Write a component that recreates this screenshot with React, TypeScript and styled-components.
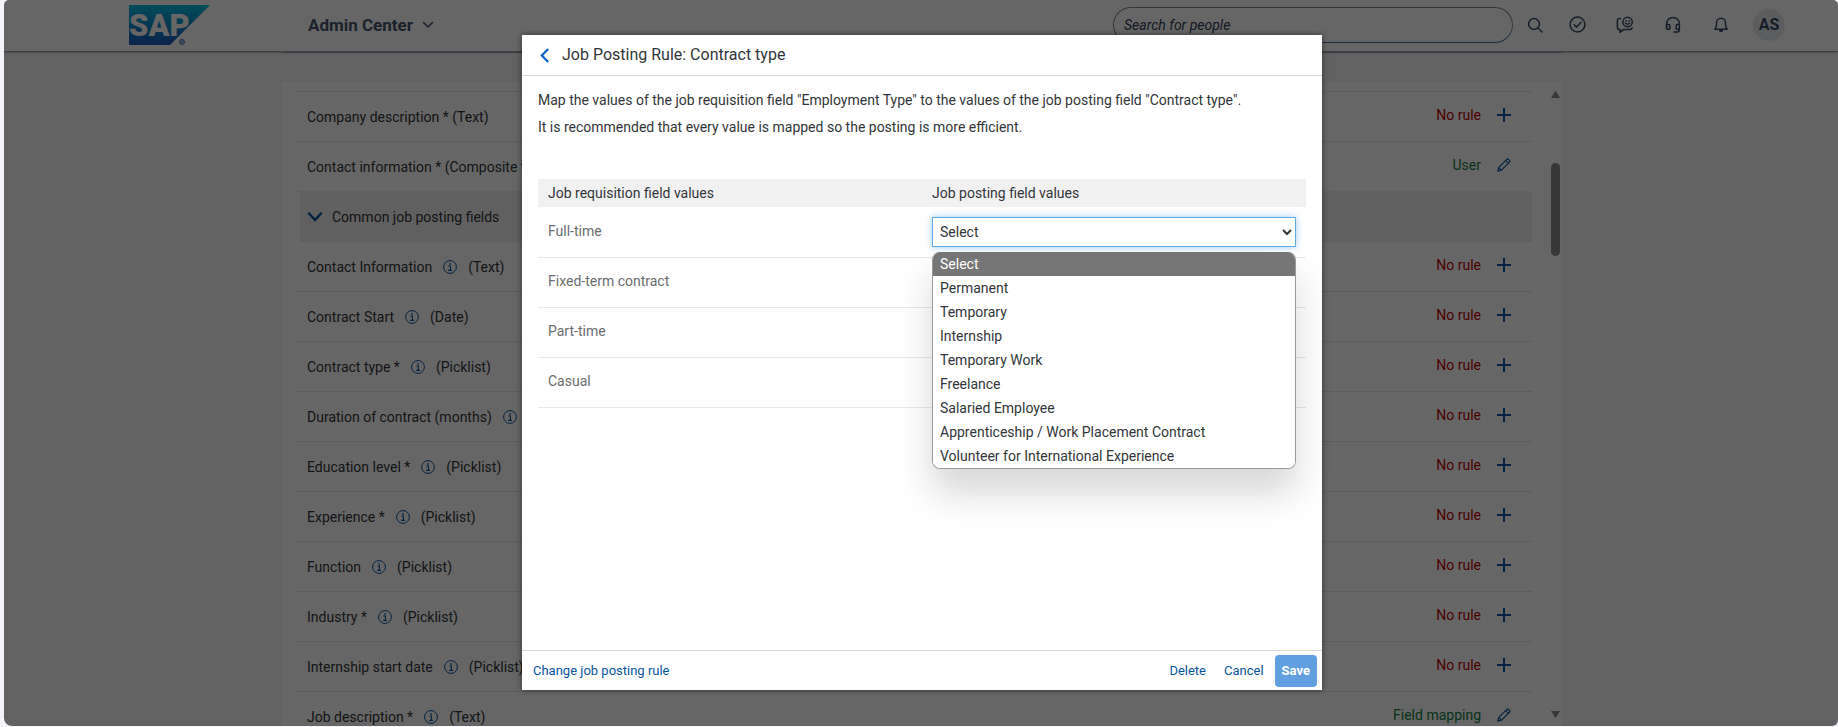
import React from "react";
import styled, { createGlobalStyle, css } from "styled-components";

const Global = createGlobalStyle`
  *, *::before, *::after { box-sizing: border-box; }
  body { margin: 0; background: #f4f5f8; font: 14px/20px Roboto, "Liberation Sans", sans-serif; color: #32363a; }
  button, input, select { font: inherit; color: inherit; }
  h1, p, ul { margin: 0; padding: 0; font-weight: 400; }
`;

const Frame = styled.div`
  position: relative;
  display: flex;
  flex-direction: column;
  height: calc(100vh - 1px);
  margin-left: 4px;
  background: #f5f6f7;
  border-radius: 5px 5px 6px 8px;
  overflow: hidden;
`;

const ShellBar = styled.header`
  display: flex;
  align-items: center;
  flex: none;
  height: 51px;
  padding: 0 45px 2px 125px;
  background: #fff;
  box-shadow: 0 1px 2px rgba(40, 60, 90, 0.7);
`;

const Logo = styled.svg`
  width: 81px;
  height: 40px;
  margin-right: 98px;
`;

const PlainButton = styled.button`
  display: flex;
  align-items: center;
  padding: 0;
  border: 0;
  background: none;
`;

const AreaButton = styled(PlainButton)`
  gap: 9px;
  color: #45556b;
  font-size: 17px;
  font-weight: 700;
`;

const ShellTools = styled.nav`
  display: flex;
  align-items: center;
  margin-left: auto;
`;

const PeopleSearch = styled.input`
  width: 400px;
  height: 36px;
  margin-right: 4px;
  padding: 0 10px;
  background: #fff;
  border: 1px solid #7e8ca0;
  border-bottom-color: #4f70a8;
  border-radius: 18px;
  &::placeholder { color: #32405a; font-style: italic; opacity: 1; }
`;

const ToolButton = styled(PlainButton)<{ $narrow?: boolean }>`
  justify-content: center;
  width: ${p => (p.$narrow ? 36 : 48)}px;
  height: 36px;
  color: #354a68;
`;

const Avatar = styled.span`
  width: 32px;
  height: 32px;
  border-radius: 16px;
  background: #e6e8ee;
  color: #354a68;
  font-size: 16px;
  font-weight: 700;
  line-height: 32px;
`;

const Page = styled.div`
  display: flex;
  flex: 1;
  flex-direction: column;
  align-items: center;
  min-height: 0;
  padding-left: 2px;
`;

const PageShade = styled.div`
  flex: none;
  width: 100%;
  max-width: 1280px;
  height: 1px;
  margin-bottom: 30px;
  background: #9aa0aa;
  box-shadow: 0 1px 1px rgba(60, 70, 90, 0.4);
`;

const Panel = styled.main`
  display: flex;
  flex: 1;
  min-height: 0;
  width: 100%;
  max-width: 1280px;
  padding: 9px 2px 0 15px;
  background: #fff;
`;

const FieldList = styled.ul`
  flex: 1;
  overflow: hidden;
  border-top: 1px solid #e5e5e5;
  list-style: none;
`;

const FieldRow = styled.li`
  display: flex;
  align-items: center;
  justify-content: space-between;
  height: 50px;
  padding: 0 21px 0 10px;
  border-bottom: 1px solid #e5e5e5;
`;

const GroupRow = styled.li`
  height: 51px;
  margin: -1px 0 0 3px;
  padding: 0 7px;
  background: #f0f0f0;
`;

const GroupToggle = styled(PlainButton)`
  gap: 9px;
  height: 51px;
`;

const FieldName = styled.span`
  display: flex;
  align-items: center;
  gap: 11px;
`;

const InfoButton = styled(PlainButton)`
  color: #0854a0;
`;

const RuleState = styled.span<{ $mapped: boolean }>`
  display: flex;
  align-items: center;
  gap: 16px;
  padding-bottom: 3px;
  color: ${p => (p.$mapped ? "#107e3e" : "#bb0000")};
`;

const RuleButton = styled(PlainButton)`
  color: #0854a0;
`;

const ScrollRail = styled.div`
  display: flex;
  flex-direction: column;
  align-items: center;
  width: 9px;
  margin-left: 19px;
  padding-bottom: 8px;
`;

const ScrollThumb = styled.div`
  width: 9px;
  height: 93px;
  margin: 65px 0 auto;
  border-radius: 5px;
  background: #8b8b8b;
`;

const Backdrop = styled.div`
  position: absolute;
  inset: 0;
  display: flex;
  align-items: center;
  justify-content: center;
  padding: 35px 0 36px 2px;
  background: rgba(0, 0, 0, 0.6);
`;

const Dialog = styled.section`
  display: flex;
  flex-direction: column;
  width: 100%;
  max-width: 800px;
  height: 100%;
  background: #fff;
  box-shadow: 0 0 6px rgba(0, 0, 0, 0.5);
`;

const DialogHead = styled.header`
  display: flex;
  align-items: center;
  gap: 13px;
  height: 41px;
  padding: 0 18px;
  border-bottom: 1px solid #d9d9d9;
`;

const DialogTitle = styled.h1`
  font-size: 16px;
  line-height: 24px;
`;

const DialogBody = styled.div`
  flex: 1;
  padding: 11px 16px;
`;

const Intro = styled.p`
  margin-bottom: 38px;
  line-height: 27px;
`;

const MapTable = styled.table`
  width: 100%;
  table-layout: fixed;
  border-collapse: collapse;
  text-align: left;
`;

const HeadCell = styled.th`
  height: 28px;
  padding: 0 10px 1px;
  background: #f1f1f1;
  font-weight: 400;
`;

const cell = css`
  height: 50px;
  padding: 0 10px;
  border-bottom: 1px solid #e8e8e8;
  font-weight: 400;
`;

const NameCell = styled.th`
  ${cell}
  padding-bottom: 2px;
  color: #6a6d70;
`;

const ValueCell = styled.td`
  ${cell}
`;

const SelectWrap = styled.div`
  position: relative;
`;

const ValueSelect = styled.select<{ $open?: boolean }>`
  display: block;
  width: 100%;
  height: 30px;
  padding: 0 3px;
  background: #fff;
  border: 1px solid ${p => (p.$open ? "#5fa9e6" : "#89919a")};
  border-radius: 0;
  outline: none;
  box-shadow: ${p => (p.$open ? "0 0 7px rgba(95, 169, 230, 0.6)" : "none")};
`;

const OptionList = styled.ul`
  position: absolute;
  z-index: 1;
  top: 35px;
  left: 0;
  right: 0;
  border: 1px solid #9a9a9a;
  border-top: 0;
  border-radius: 8px;
  background: #fff;
  box-shadow: 0 24px 36px rgba(0, 0, 0, 0.16);
  list-style: none;
  overflow: hidden;
`;

const Option = styled.li<{ $selected: boolean }>`
  height: 24px;
  padding: 0 7px;
  line-height: 24px;
  color: ${p => (p.$selected ? "#fff" : "#32363a")};
  background: ${p => (p.$selected ? "#767676" : "#fff")};
`;

const DialogFoot = styled.footer`
  display: flex;
  align-items: center;
  height: 40px;
  padding: 1px 5px 0 2px;
  border-top: 1px solid #d9d9d9;
`;

const FootButton = styled.button`
  height: 32px;
  padding: 0 9px;
  border: 0;
  border-radius: 4px;
  background: none;
  color: #0854a0;
  font-size: 13px;
`;

const PrimaryButton = styled(FootButton)`
  margin-left: 2px;
  padding: 0 7px;
  background: #619fe0;
  color: #fff;
  font-weight: 700;
`;

const FootSpacer = styled.span`
  flex: 1;
`;

const stroke = { fill: "none", stroke: "currentColor", strokeLinecap: "round" as const, strokeLinejoin: "round" as const };

const SapLogo = () => (
  <Logo viewBox="0 0 81 40" role="img" aria-label="SAP">
    <defs>
      <linearGradient id="sap" x1="0" y1="0" x2="0" y2="1">
        <stop offset="0" stopColor="#08bfe0" />
        <stop offset="0.5" stopColor="#0c8cd0" />
        <stop offset="1" stopColor="#2058b8" />
      </linearGradient>
    </defs>
    <path d="M0 0H81L41 40H0Z" fill="url(#sap)" />
    <text x="0" y="31" fill="#fff" fontFamily="Roboto, Liberation Sans, sans-serif" fontWeight="900" fontSize="31">SAP</text>
    <circle cx="53" cy="37" r="2.4" fill="none" stroke="#2058b8" />
    <circle cx="53" cy="37" r="0.9" fill="#2058b8" />
  </Logo>
);

const Chevron = () => (
  <svg width="12" height="8" viewBox="0 0 12 8" {...stroke} strokeWidth="1.6"><path d="M1.5 1.5L6 6l4.5-4.5" /></svg>
);
const GroupChevron = () => (
  <svg width="16" height="10" viewBox="0 0 16 10" fill="none" stroke="#0854a0" strokeWidth="2.4" strokeLinecap="round"><path d="M2 1.5l6 6.5 6-6.5" /></svg>
);
const BackArrow = () => (
  <svg width="9" height="15" viewBox="0 0 9 15" fill="none" stroke="#0a62c4" strokeWidth="2.2"><path d="M8.2 1L1.8 7.5 8.2 14" /></svg>
);
const SearchIcon = () => (
  <svg width="16" height="16" viewBox="0 0 16 16" {...stroke} strokeWidth="1.5"><circle cx="7" cy="7" r="5.4" /><path d="M11 11l4 4" /></svg>
);
const CheckIcon = () => (
  <svg width="17" height="17" viewBox="0 0 17 17" {...stroke} strokeWidth="1.5"><circle cx="8.5" cy="8.5" r="7.4" /><path d="M5.2 8.8l2.4 2.3 4.4-4.8" /></svg>
);
const FeedbackIcon = () => (
  <svg width="18" height="18" viewBox="0 0 18 18" {...stroke} strokeWidth="1.5">
    <path d="M4.4 2.6H3.2Q1.4 2.6 1.4 4.6v7q0 1.8 1.8 1.8h.9v3l3.6-3h6.2q2 0 2.2-1.6" />
    <circle cx="11.6" cy="6" r="4.7" />
    <path d="M9.4 7q2.2 2.2 4.4 0" strokeWidth="1.2" />
    <path d="M10 4.8v.1M13.2 4.8v.1" strokeWidth="1.6" />
  </svg>
);
const HeadsetIcon = () => (
  <svg width="16" height="18" viewBox="0 0 16 18" {...stroke} strokeWidth="1.5">
    <path d="M1.6 12.2V7.8a6.4 6.4 0 0 1 12.8 0v5.6q0 2.4-2.4 2.6H9" />
    <path d="M1.6 8.6H4q.8 0 .8.8v3q0 .8-.8.8H2.6q-1 0-1-1zM14.4 8.6H12q-.8 0-.8.8v3q0 .8.8.8h2.4" />
  </svg>
);
const BellIcon = () => (
  <svg width="16" height="16" viewBox="0 0 16 16" {...stroke} strokeWidth="1.5">
    <path d="M1.8 12.2q1.7-1.8 1.7-4.6V6a4.5 4.8 0 0 1 9 0v1.6q0 2.8 1.7 4.6z" />
    <path d="M6.6 13h2.8q-.2 1.6-1.4 1.6T6.6 13z" fill="currentColor" />
  </svg>
);
const InfoIcon = () => (
  <svg width="14" height="14" viewBox="0 0 14 14" fill="none" stroke="currentColor">
    <circle cx="7" cy="7" r="6.4" />
    <path d="M5.4 6H7.4v4M5.2 10.4h3.8" strokeWidth="1.1" />
    <path d="M7.1 3.2v1.5" strokeWidth="1.5" />
  </svg>
);
const PlusIcon = () => (
  <svg width="14" height="14" viewBox="0 0 14 14" stroke="currentColor" strokeWidth="2"><path d="M7 0v14M0 7h14" /></svg>
);
const PencilIcon = () => (
  <svg width="14" height="14" viewBox="0 0 14 14" {...stroke} strokeWidth="1.2"><path d="M.8 13.2l1-3.8 8-8q.8-.8 1.6 0l1.1 1.1q.8.8 0 1.6l-8 8zM8.700 2.600l2.700 2.700M1.800 9.600l2.600 2.600" /></svg>
);
const Arrow = ({ down = false }: { down?: boolean }) => (
  <svg width="9" height="7" viewBox="0 0 9 7" fill="#8b8b8b"><path d={down ? "M0 0H9L5 6.500H4Z" : "M0 7H9L5 .5H4Z"} /></svg>
);

type Field = { name: string; type?: string; rule?: string };

const topFields: Field[] = [
  { name: "Company description * (Text)" },
  { name: "Contact information * (Composite field)", rule: "User" },
];

const commonFields: Field[] = [
  { name: "Contact Information", type: "(Text)" },
  { name: "Contract Start", type: "(Date)" },
  { name: "Contract type *", type: "(Picklist)" },
  { name: "Duration of contract (months)", type: "(Text)" },
  { name: "Education level *", type: "(Picklist)" },
  { name: "Experience *", type: "(Picklist)" },
  { name: "Function", type: "(Picklist)" },
  { name: "Industry *", type: "(Picklist)" },
  { name: "Internship start date", type: "(Picklist)" },
  { name: "Job description *", type: "(Text)", rule: "Field mapping" },
];

const requisitionValues = ["Full-time", "Fixed-term contract", "Part-time", "Casual"];

const postingValues = [
  "Select",
  "Permanent",
  "Temporary",
  "Internship",
  "Temporary Work",
  "Freelance",
  "Salaried Employee",
  "Apprenticeship / Work Placement Contract",
  "Volunteer for International Experience",
];

const FieldItem = ({ name, type, rule }: Field) => (
  <FieldRow>
    <FieldName>
      {name}
      {type && <InfoButton aria-label={`About ${name}`}><InfoIcon /></InfoButton>}
      {type && <span>{type}</span>}
    </FieldName>
    <RuleState $mapped={!!rule}>
      {rule ?? "No rule"}
      <RuleButton aria-label={rule ? `Edit rule for ${name}` : `Add rule for ${name}`}>
        {rule ? <PencilIcon /> : <PlusIcon />}
      </RuleButton>
    </RuleState>
  </FieldRow>
);

export default function App() {
  return (
    <>
      <Global />
      <Frame>
        <ShellBar>
          <SapLogo />
          <AreaButton>Admin Center <Chevron /></AreaButton>
          <ShellTools>
            <PeopleSearch type="text" placeholder="Search for people" aria-label="Search for people" />
            <ToolButton $narrow aria-label="Search"><SearchIcon /></ToolButton>
            <ToolButton aria-label="To-do"><CheckIcon /></ToolButton>
            <ToolButton aria-label="Feedback"><FeedbackIcon /></ToolButton>
            <ToolButton aria-label="Support"><HeadsetIcon /></ToolButton>
            <ToolButton aria-label="Notifications"><BellIcon /></ToolButton>
            <ToolButton aria-label="Account"><Avatar>AS</Avatar></ToolButton>
          </ShellTools>
        </ShellBar>
        <Page>
          <PageShade />
          <Panel>
            <FieldList>
              {topFields.map(f => <FieldItem key={f.name} {...f} />)}
              <GroupRow>
                <GroupToggle aria-expanded="true"><GroupChevron />Common job posting fields</GroupToggle>
              </GroupRow>
              {commonFields.map(f => <FieldItem key={f.name} {...f} />)}
            </FieldList>
            <ScrollRail aria-hidden="true">
              <Arrow />
              <ScrollThumb />
              <Arrow down />
            </ScrollRail>
          </Panel>
        </Page>
        <Backdrop>
          <Dialog role="dialog" aria-labelledby="dialog-title">
            <DialogHead>
              <PlainButton aria-label="Back"><BackArrow /></PlainButton>
              <DialogTitle id="dialog-title">Job Posting Rule: Contract type</DialogTitle>
            </DialogHead>
            <DialogBody>
              <Intro>
                Map the values of the job requisition field "Employment Type" to the values of the job posting field "Contract type".
                <br />
                It is recommended that every value is mapped so the posting is more efficient.
              </Intro>
              <MapTable>
                <thead>
                  <tr>
                    <HeadCell scope="col">Job requisition field values</HeadCell>
                    <HeadCell scope="col">Job posting field values</HeadCell>
                  </tr>
                </thead>
                <tbody>
                  {requisitionValues.map((value, i) => (
                    <tr key={value}>
                      <NameCell scope="row"><label htmlFor={`value-${i}`}>{value}</label></NameCell>
                      <ValueCell>
                        <SelectWrap>
                          <ValueSelect id={`value-${i}`} $open={i === 0} defaultValue="Select">
                            {postingValues.map(v => <option key={v}>{v}</option>)}
                          </ValueSelect>
                          {i === 0 && (
                            <OptionList role="listbox" aria-label="Job posting field values">
                              {postingValues.map((v, n) => (
                                <Option key={v} role="option" aria-selected={n === 0} $selected={n === 0}>{v}</Option>
                              ))}
                            </OptionList>
                          )}
                        </SelectWrap>
                      </ValueCell>
                    </tr>
                  ))}
                </tbody>
              </MapTable>
            </DialogBody>
            <DialogFoot>
              <FootButton>Change job posting rule</FootButton>
              <FootSpacer />
              <FootButton>Delete</FootButton>
              <FootButton>Cancel</FootButton>
              <PrimaryButton>Save</PrimaryButton>
            </DialogFoot>
          </Dialog>
        </Backdrop>
      </Frame>
    </>
  );
}
